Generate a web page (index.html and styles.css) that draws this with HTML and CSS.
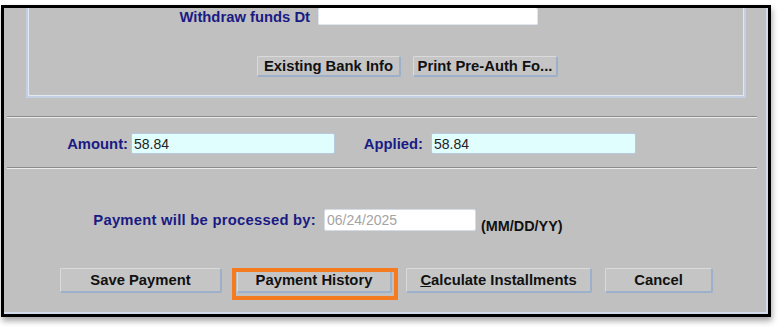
FILE: index.html
```html
<!DOCTYPE html>
<html lang="en">
<head>
    <meta charset="UTF-8">
    <title>Payment</title>
    <link rel="stylesheet" href="styles.css">
</head>
<body>
    <div class="window">
        <div class="panel">
            <!-- bank info group (top is scrolled off) -->
            <div class="group">
                <div class="row withdraw-row">
                    <label class="label withdraw-label">Withdraw funds Dt</label>
                    <input type="text" class="field withdraw-field" value="">
                </div>
                <div class="row group-buttons">
                    <button class="btn btn-small bank-btn">Existing Bank Info</button>
                    <button class="btn btn-small print-btn">Print Pre-Auth Fo...</button>
                </div>
            </div>

            <div class="separator sep-first"></div>

            <div class="row amount-row">
                <label class="label amount-label">Amount:</label>
                <input type="text" class="field amount-field" value="58.84">
                <label class="label applied-label">Applied:</label>
                <input type="text" class="field amount-field applied-field" value="58.84">
            </div>

            <div class="separator sep-second"></div>

            <div class="row process-row">
                <label class="label process-label">Payment will be processed by:</label>
                <input type="text" class="field date-field" placeholder="06/24/2025">
                <span class="hint">(MM/DD/YY)</span>
            </div>

            <div class="row action-row">
                <button class="btn save-btn">Save Payment</button>
                <div class="highlight-wrap">
                    <button class="btn history-btn">Payment History</button>
                    <span class="highlight"></span>
                </div>
                <button class="btn calc-btn"><u>C</u>alculate Installments</button>
                <button class="btn cancel-btn">Cancel</button>
            </div>
        </div>
    </div>
</body>
</html>
```

FILE: styles.css
```css
* {
    margin: 0;
    padding: 0;
    box-sizing: border-box;
    font-family: 'Liberation Sans', Arial, sans-serif;
}

body {
    background: #fff;
    width: 778px;
    height: 327px;
    overflow: hidden;
}

/* outer window frame */
.window {
    margin: 5px 0 0 1px;
    width: 770px;
    height: 312px;
    border: 3px solid #000;
    box-shadow: 1px 4px 6px rgba(0,0,0,0.35);
}

.panel {
    height: 100%;
    background: #c0c0c0;
    border-right: 2px solid #d2dcea;
    border-bottom: 2px solid #d2dcea;
    overflow: hidden;
}

.row {
    display: flex;
    align-items: center;
}

.label {
    color: #1a1a84;
    font-weight: 700;
    font-size: 14.8px;
    text-align: right;
    white-space: nowrap;
}

.field {
    font-size: 14px;
    color: #222;
    background: #fff;
    border: 1px solid #c6d2e4;
    border-radius: 2px;
    padding: 0 2px;
    outline: none;
}

.field::placeholder {
    color: #a4a4a4;
}

/* group box */
.group {
    width: 720px;
    height: 90px;
    margin-left: 22px;
    border: 2px solid #c4d0e2;
    border-top: none;
    box-shadow: inset 1px 0 0 #e2e8f2, inset -1px -1px 0 #e2e8f2;
}

.withdraw-row {
    height: 17px;
}

.withdraw-label {
    width: 282px;
    margin-right: 8px;
}

.withdraw-field {
    width: 220px;
    height: 17px;
    border-top: none;
    border-color: #dfe6f0;
}

.group-buttons {
    margin-top: 31px;
    padding-left: 229px;
    gap: 12px;
}

/* buttons */
.btn {
    height: 25px;
    font-size: 14.8px;
    font-weight: 700;
    color: #111;
    background: #c5c5c5;
    border: 1px solid;
    border-color: #dadada #9cb0cc #9cb0cc #dadada;
    border-right-width: 2px;
    border-bottom-width: 2px;
    border-radius: 2px;
    white-space: nowrap;
}

.btn u {
    text-decoration: underline;
}

.btn-small {
    height: 21px;
}

.bank-btn {
    width: 144px;
}

.print-btn {
    width: 145px;
}

/* separators */
.separator {
    width: 750px;
    margin-left: 3px;
    border-top: 1px solid #8c8c8c;
    border-bottom: 1px solid #ececec;
}

.sep-first {
    margin-top: 18px;
}

.sep-second {
    margin-top: 13px;
}

/* amount row */
.amount-row {
    margin-top: 15px;
}

.amount-label {
    width: 124px;
    margin-right: 3px;
}

.amount-field {
    width: 204px;
    height: 21px;
    background: #e0fefe;
    border-color: #b8c8de;
}

.applied-label {
    width: 88px;
    margin-right: 8px;
}

.applied-field {
    width: 205px;
}

/* processed by */
.process-row {
    margin-top: 40px;
    align-items: flex-end;
}

.process-label {
    width: 312px;
    margin-right: 8px;
    padding-bottom: 3px;
    letter-spacing: 0.25px;
}

.date-field {
    width: 152px;
    height: 22px;
    border-color: #d4dce8;
}

.hint {
    margin-left: 5px;
    font-size: 14.4px;
    font-weight: 700;
    color: #111;
    margin-bottom: -3px;
}

/* bottom buttons */
.action-row {
    margin-top: 37px;
    padding-left: 56px;
}

.save-btn {
    width: 162px;
}

.highlight-wrap {
    position: relative;
    margin-left: 15px;
}

.history-btn {
    width: 155px;
    display: block;
}

.highlight {
    position: absolute;
    left: -5px;
    top: 0;
    width: 166px;
    height: 32px;
    border: 4px solid #f47b20;
}

.calc-btn {
    width: 186px;
    margin-left: 14px;
}

.cancel-btn {
    width: 108px;
    margin-left: 13px;
}
```
